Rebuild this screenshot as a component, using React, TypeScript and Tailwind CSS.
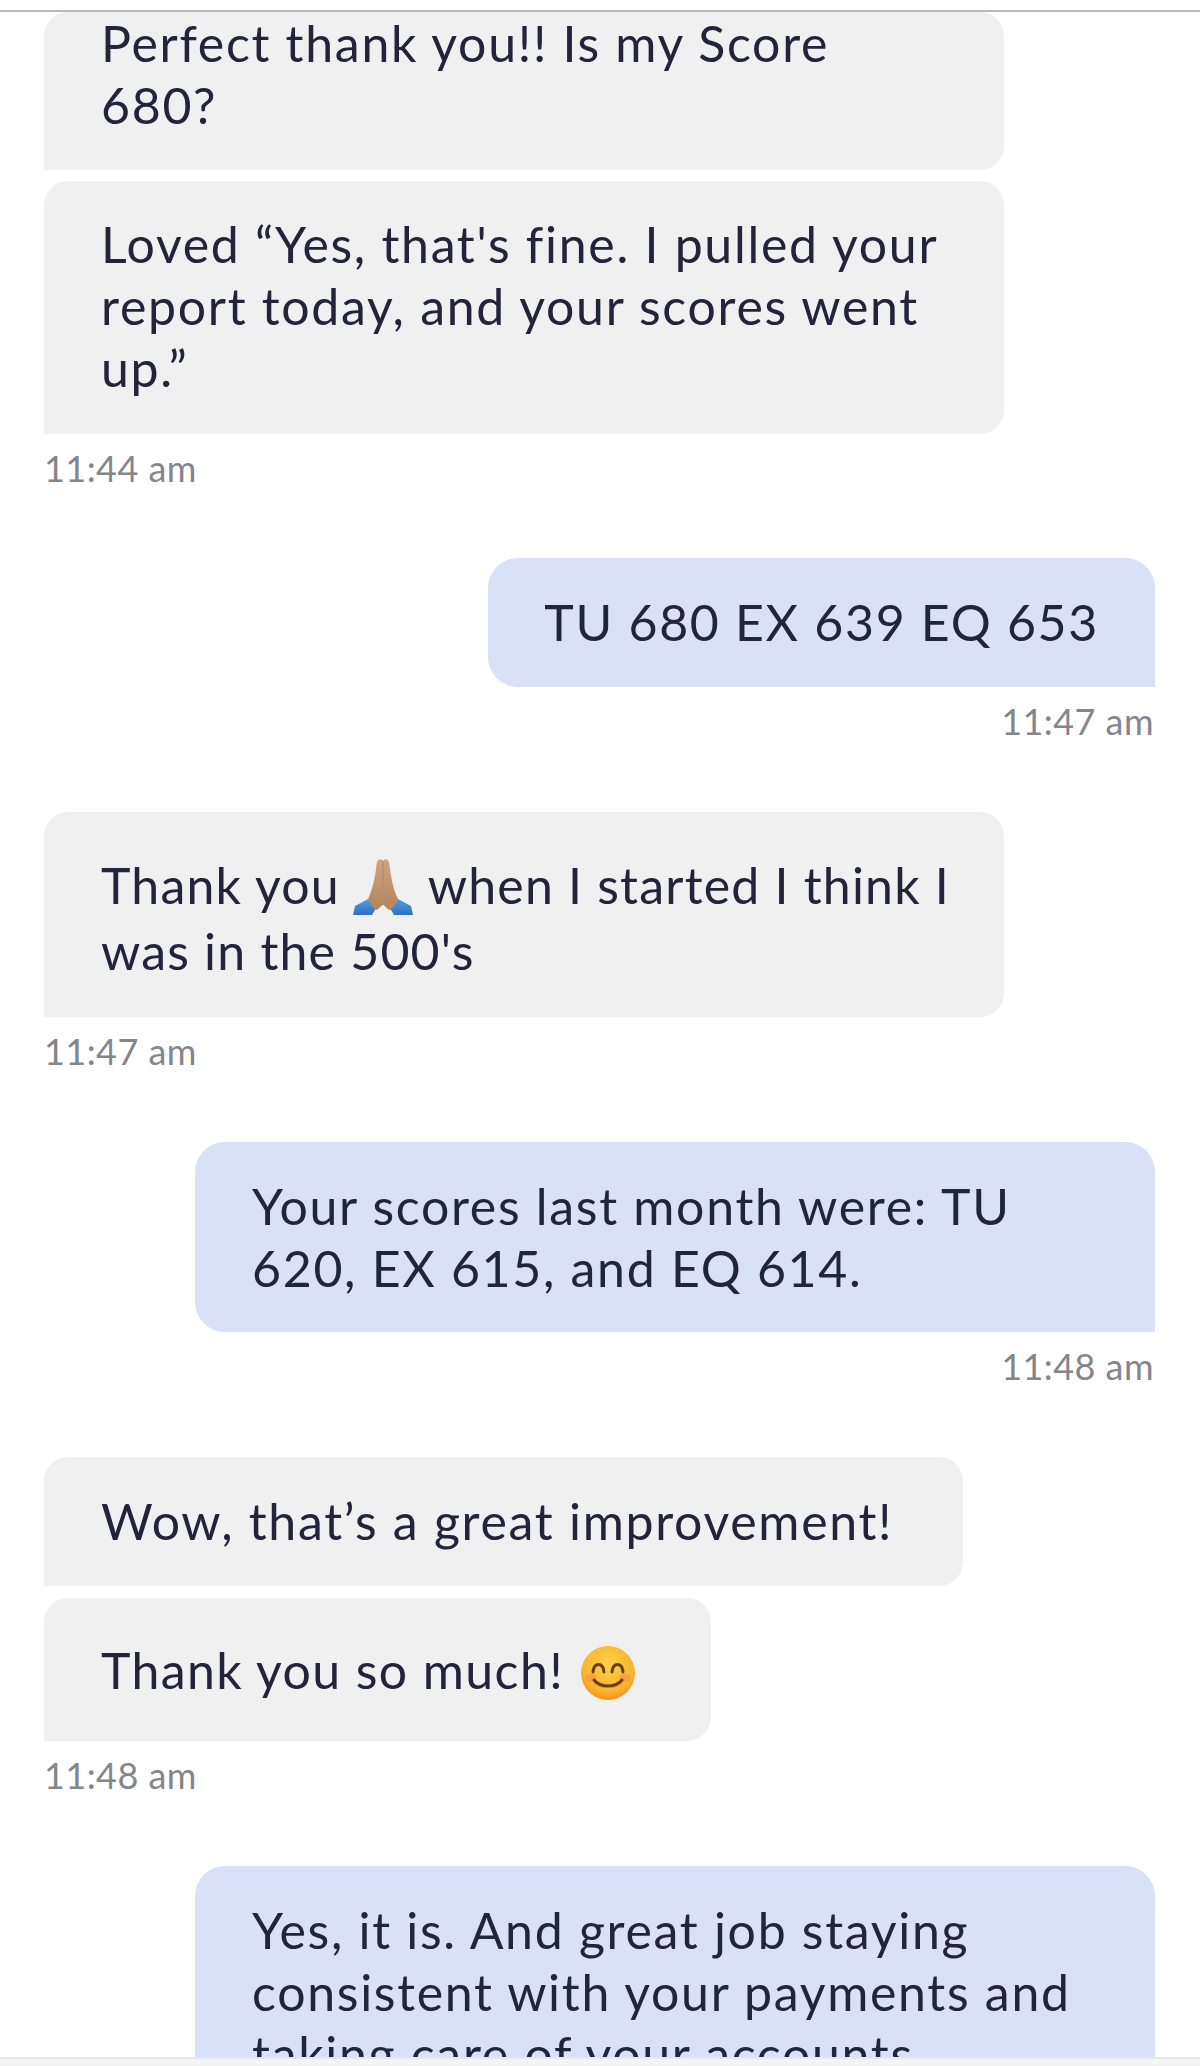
function PrayHands() {
    return (
        <svg viewBox="0 0 60 58" className="inline-block w-[60px] h-[58px] align-[-12px] -ml-[1px] mr-[2px]">
            <defs>
                <linearGradient id="skin" x1="0" y1="0" x2="0" y2="1">
                    <stop offset="0" stopColor="#d0a47e" />
                    <stop offset="1" stopColor="#b3855c" />
                </linearGradient>
                <linearGradient id="sleeve" x1="0" y1="0" x2="0" y2="1">
                    <stop offset="0" stopColor="#4f9fe0" />
                    <stop offset="1" stopColor="#2f6fc0" />
                </linearGradient>
            </defs>
            <path d="M0 57 L2 48 L15 41 L23 50 L19 57 Z" fill="url(#sleeve)" />
            <path d="M60 57 L58 48 L45 41 L37 50 L41 57 Z" fill="url(#sleeve)" />
            <path d="M29.5 2 C26 0 24 2 23.5 7 C22 20 20 30 15 41 C17 46 20 51 24 52 L29.5 47 Z" fill="url(#skin)" />
            <path d="M30.5 2 C34 0 36 2 36.5 7 C38 20 40 30 45 41 C43 46 40 51 36 52 L30.5 47 Z" fill="url(#skin)" />
            <path d="M30 3 V47" stroke="#8a6040" strokeWidth="1" />
        </svg>
    );
}

function Smile() {
    return (
        <svg viewBox="0 0 56 56" className="inline-block w-[56px] h-[56px] align-[-12px] ml-[2px]">
            <defs>
                <radialGradient id="face" cx="0.5" cy="0.35" r="0.7">
                    <stop offset="0" stopColor="#fcd24a" />
                    <stop offset="0.7" stopColor="#f9b32c" />
                    <stop offset="1" stopColor="#ee8a1a" />
                </radialGradient>
            </defs>
            <circle cx="28" cy="28" r="27" fill="url(#face)" />
            <ellipse cx="11" cy="33" rx="6" ry="4" fill="#f58a50" opacity="0.5" />
            <ellipse cx="45" cy="33" rx="6" ry="4" fill="#f58a50" opacity="0.5" />
            <path d="M13 27 C14 17 23 17 24 27" fill="none" stroke="#6b3f10" strokeWidth="3" strokeLinecap="round" />
            <path d="M32 27 C33 17 42 17 43 27" fill="none" stroke="#6b3f10" strokeWidth="3" strokeLinecap="round" />
            <path d="M14 35 C20 43 36 43 42 35" fill="none" stroke="#6b3f10" strokeWidth="3" strokeLinecap="round" />
        </svg>
    );
}

function Time({ children, right }: { children: string; right?: boolean }) {
    return (
        <div className={`text-[36px] leading-[44px] tracking-[0.45px] text-[#84868c] mt-[12px] ${right ? 'text-right pr-[1px]' : ''}`}>
            {children}
        </div>
    );
}

export default function App() {
    const gray = 'bg-[#f0f0f1] rounded-[24px] rounded-bl-none px-[57px]';
    const blue = 'bg-[#d8e1f8] rounded-[30px] rounded-br-none px-[57px]';

    return (
        <div className="h-[2066px] w-[1200px] overflow-hidden bg-white flex flex-col text-[#22253a] text-[50px] leading-[62px] tracking-[1.7px] font-['Lato',sans-serif]">
            <div className="h-[12px] shrink-0 border-b-2 border-[#b9b9b9]" />
            <div className="flex-1 min-h-0 overflow-hidden pl-[44px] pr-[45px]">
                <div className={`${gray} w-[960px] h-[158px]`}>
                    Perfect thank you!! Is my Score
                    <br />
                    680?
                </div>
                <div className={`${gray} w-[960px] h-[253px] mt-[11px] pt-[32px]`}>
                    Loved “Yes, that's fine. I pulled your report today, and your scores went up.”
                </div>
                <Time>11:44 am</Time>

                <div className="flex justify-end mt-[68px]">
                    <div className={`${blue} h-[129px] pt-[33px] !px-[56px]`}>TU 680 EX 639 EQ 653</div>
                </div>
                <Time right>11:47 am</Time>

                <div className={`${gray} w-[960px] h-[205px] mt-[69px] pt-[40px] leading-[66px] tracking-[1.2px] whitespace-nowrap`}>
                    Thank you <PrayHands /> when I started I think I
                    <br />
                    was in the 500's
                </div>
                <Time>11:47 am</Time>

                <div className={`${blue} w-[960px] h-[190px] mt-[69px] ml-[151px] pt-[33px]`}>
                    Your scores last month were: TU 620, EX 615, and EQ 614.
                </div>
                <Time right>11:48 am</Time>

                <div className={`${gray} w-[919px] h-[129px] mt-[69px] pt-[33px]`}>Wow, that’s a great improvement!</div>
                <div className={`${gray} w-[667px] h-[143px] mt-[12px] pt-[41px] tracking-[1.4px]`}>
                    Thank you so much! <Smile />
                </div>
                <Time>11:48 am</Time>

                <div className={`${blue} w-[960px] h-[300px] mt-[69px] ml-[151px] pt-[33px]`}>
                    Yes, it is. And great job staying consistent with your payments and taking care of your accounts
                </div>
            </div>
            <div className="h-[9px] shrink-0 bg-[#f4f4f5] border-t-2 border-[#e8e8ea]" />
        </div>
    );
}
